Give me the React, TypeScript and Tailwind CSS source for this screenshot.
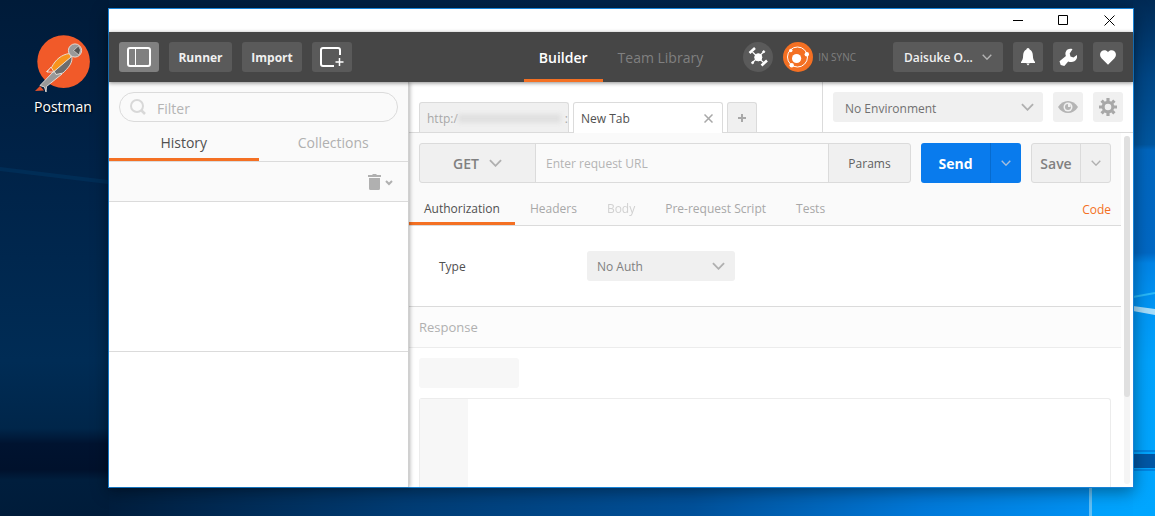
import React, { useState } from "react";
import clsx from "clsx";

const requestTabs = ["Authorization", "Headers", "Body", "Pre-request Script", "Tests"];

function Chevron({ className = "w-[14px] h-[8px]" }: { className?: string }) {
  return (
    <svg viewBox="0 0 14 8" className={className} fill="none" stroke="currentColor" strokeWidth="2" aria-hidden="true">
      <path d="M1 1l6 6 6-6" />
    </svg>
  );
}

function Wallpaper() {
  return (
    <svg
      className="absolute inset-0 w-full h-full"
      viewBox="0 0 1155 516"
      preserveAspectRatio="none"
      aria-hidden="true"
    >
      <defs>
        <linearGradient id="floor" x1="0" x2="1" y1="0" y2="0">
          <stop offset="0" stopColor="#001a36" />
          <stop offset="0.09" stopColor="#001d3c" />
          <stop offset="0.18" stopColor="#002850" />
          <stop offset="0.35" stopColor="#003c74" />
          <stop offset="0.6" stopColor="#005099" />
          <stop offset="0.8" stopColor="#0078d8" />
          <stop offset="0.943" stopColor="#0091f2" />
          <stop offset="0.944" stopColor="#00a0fb" />
          <stop offset="1" stopColor="#00a6ff" />
        </linearGradient>
        <linearGradient id="sky" x1="0" x2="1" y1="0" y2="0">
          <stop offset="0" stopColor="#001b39" />
          <stop offset="0.5" stopColor="#00234a" />
          <stop offset="0.8" stopColor="#002448" />
          <stop offset="1" stopColor="#002a55" />
        </linearGradient>
        <linearGradient id="left" x1="0" x2="0" y1="0" y2="1">
          <stop offset="0" stopColor="#001b39" />
          <stop offset="0.3" stopColor="#002247" />
          <stop offset="0.7" stopColor="#002c55" />
          <stop offset="0.83" stopColor="#00264a" />
          <stop offset="0.86" stopColor="#001330" />
          <stop offset="0.91" stopColor="#00112c" />
          <stop offset="0.93" stopColor="#001e3d" />
          <stop offset="1" stopColor="#001c3a" />
        </linearGradient>
        <linearGradient id="right" x1="0" x2="0" y1="0" y2="1">
          <stop offset="0" stopColor="#002a55" />
          <stop offset="0.15" stopColor="#004685" />
          <stop offset="0.28" stopColor="#00569f" />
          <stop offset="0.29" stopColor="#0065bd" />
          <stop offset="0.49" stopColor="#0068c4" />
          <stop offset="0.51" stopColor="#0084e6" />
          <stop offset="0.6" stopColor="#0096f5" />
          <stop offset="0.7" stopColor="#00a2fc" />
          <stop offset="1" stopColor="#00a6ff" />
        </linearGradient>
      </defs>
      <rect width="1155" height="516" fill="url(#sky)" />
      <rect y="440" width="1155" height="76" fill="url(#floor)" />
      <rect width="109" height="516" fill="url(#left)" />
      <rect x="1133" width="22" height="516" fill="url(#right)" />
      <path d="M0 167L108 180V184L0 171z" fill="#003b6c" opacity="0.4" />
      <path d="M1133 297L1155 293" stroke="#29b8f8" strokeWidth="2" />
      <path d="M1133 306L1155 309V315L1133 311z" fill="#a5dcfa" />
      <rect x="1133" y="450" width="22" height="2" fill="#0085e2" />
      <rect x="1133" y="454" width="22" height="14" fill="#0057a5" />
      <rect x="1133" y="469" width="22" height="2" fill="#0085e2" />
      <rect x="1089" y="487" width="3" height="29" fill="#62bff4" />
    </svg>
  );
}

function DesktopIcon() {
  return (
    <div className="relative w-[108px] shrink-0 pt-[35px] pl-[18px]">
      <div className="w-[90px] flex flex-col items-center">
        <svg viewBox="0 0 56 58" className="w-[56px] h-[58px]" aria-hidden="true">
          <circle cx="28.6" cy="26.6" r="26.3" fill="#f15a29" />
          <g stroke="#e9e4df" strokeWidth="0.9" strokeLinejoin="round">
            <path d="M20 35L5 50.500l4.500 1.500L11 57l.5-5.500L27 39z" fill="#999" />
            <path d="M36.500 21L19 36l2 3.500 7-1.500c5-5 9-9 9-15z" fill="#6d6d6d" />
            <path d="M34.500 18.500c-8 1-14 6-18 14L11.500 36.500l7.500 0 17-14.500z" fill="#f7941d" />
            <path d="M12 37l4-5 3 5z" fill="#f15a29" />
            <circle cx="40" cy="15.500" r="6.600" fill="#999" />
            <path d="M38.500 15.500l5-4.500 2 4-1.500 5z" fill="#555" strokeWidth="0.600" />
          </g>
          <path d="M0 56l5-5 4 4.500z" fill="#e0502b" />
        </svg>
        <span className="mt-1 text-sm leading-5 text-white [text-shadow:1px_1px_2px_#000]">Postman</span>
      </div>
    </div>
  );
}

function TitleBar() {
  return (
    <div className="h-[23px] shrink-0 bg-white flex justify-end text-black">
      <button aria-label="Minimize" className="w-[45px] flex items-center justify-center">
        <svg viewBox="0 0 11 11" className="w-[11px] h-[11px]" fill="none" stroke="currentColor"><path d="M0 5.500h10" /></svg>
      </button>
      <button aria-label="Maximize" className="w-[45px] flex items-center justify-center">
        <svg viewBox="0 0 11 11" className="w-[11px] h-[11px]" fill="none" stroke="currentColor"><path d="M.5.5h9v9h-9z" /></svg>
      </button>
      <button aria-label="Close" className="w-[47px] flex items-center justify-center">
        <svg viewBox="0 0 11 11" className="w-[11px] h-[11px]" fill="none" stroke="currentColor"><path d="M.5.5l10 10M10.500.5l-10 10" /></svg>
      </button>
    </div>
  );
}

function Header() {
  const btn = "h-[30px] rounded-[3px] bg-[#5a5a5a] flex items-center justify-center";
  return (
    <header className="relative z-20 h-[50px] shrink-0 px-[10px] bg-[#464646] text-white grid grid-cols-[1fr_auto_1fr] items-center shadow-[0_1px_4px_rgba(0,0,0,0.45)]">
      <div className="flex gap-[10px] text-xs font-bold text-[#f0f0f0]">
        <button aria-label="Toggle sidebar" className="h-[30px] w-[40px] rounded-[3px] bg-[#808080] flex items-center justify-center">
          <svg viewBox="0 0 24 20" className="w-6 h-5" fill="none" stroke="#fff">
            <rect x="1" y="1" width="22" height="18" rx="2" strokeWidth="2" />
            <path d="M8.500 2v16" strokeWidth="1" />
          </svg>
        </button>
        <button className={clsx(btn, "w-[63px] pt-[2px]")}>Runner</button>
        <button className={clsx(btn, "w-[60px] pt-[2px]")}>Import</button>
        <button aria-label="New window" className={clsx(btn, "w-[40px]")}>
          <svg viewBox="0 0 24 20" className="w-6 h-5" fill="none" stroke="#fff">
            <path d="M20 8V3a2 2 0 0 0-2-2H3a2 2 0 0 0-2 2v14a2 2 0 0 0 2 2h11" strokeWidth="2" />
            <path d="M19.500 11v8M15.500 15h8" strokeWidth="1.500" />
          </svg>
        </button>
      </div>

      <nav className="h-[50px] flex text-sm">
        <button className="px-[15px] font-semibold border-b-[3px] border-[#f47023] pt-[5px]">Builder</button>
        <button className="px-[15px] text-[#808080] border-b-[3px] border-transparent pt-[5px]">Team Library</button>
      </nav>

      <div className="flex items-center gap-[10px] pl-[25px]">
        <button aria-label="Interceptor" className="w-[30px] h-[30px] rounded-full bg-[#5a5a5a]">
          <svg viewBox="0 0 30 30" className="w-[30px] h-[30px]" stroke="#fff" fill="#fff">
            <circle cx="15.300" cy="15.300" r="3.600" />
            <path d="M9.500 10l11.500 11M20.500 10l-11 10.500" strokeWidth="1.200" />
            <path d="M6.500 11l5.500-5M18.500 23.500l5.500-5" strokeWidth="2.600" />
            <circle cx="20.700" cy="9.700" r="1" />
            <circle cx="9.600" cy="20.700" r="1" />
          </svg>
        </button>
        <div className="flex items-center gap-[5px]">
          <button aria-label="Sync" className="w-[30px] h-[30px] rounded-full bg-[#f47023]">
            <svg viewBox="0 0 30 30" className="w-[30px] h-[30px]" fill="#fff">
              <circle cx="14.500" cy="15" r="10" fill="none" stroke="#fff" strokeWidth="1" />
              <circle cx="13.600" cy="16.500" r="4.600" />
              <circle cx="7.800" cy="8.500" r="1.700" />
              <circle cx="23.800" cy="12.300" r="2.200" />
              <circle cx="8.700" cy="23.200" r="2.200" />
            </svg>
          </button>
          <span className="text-[10px] text-[#808080] whitespace-nowrap">IN SYNC</span>
        </div>
        <button className="ml-auto h-[30px] w-[110px] rounded-[3px] bg-[#5a5a5a] pl-[11px] pr-[11px] flex items-center justify-between text-xs font-semibold text-[#f0f0f0]">
          <span className="pt-[2px]">Daisuke O...</span>
          <Chevron className="w-[10px] h-[6px] text-[#b4b4b4]" />
        </button>
        <button aria-label="Notifications" className={clsx(btn, "w-[30px]")}>
          <svg viewBox="0 0 16 18" className="w-4 h-[18px]" fill="#fff">
            <path d="M8 0c1 0 1.500.8 1.600 1.600C12 2.500 12.800 5 12.900 8c.1 3 .8 4.500 2.100 6v1H1v-1c1.300-1.500 2-3 2.100-6 .1-3 .9-5.500 3.300-6.400C6.500.8 7 0 8 0zM6.300 15.500h3.400L8 17.500z" />
          </svg>
        </button>
        <button aria-label="Settings" className={clsx(btn, "w-[30px]")}>
          <svg viewBox="0 0 18 18" className="w-[18px] h-[18px]" fill="#fff">
            <path d="M13.500 1.200C10.800.2 7.700 1.200 6.700 4c-.5 1.400-.3 2.700.2 3.900L.5 13.200l1.200 3.800 3.600 1 3.900-4.600c3.200 1.500 6.900.6 8.300-2.300.6-1.300.7-2.700.4-4.200l-3.400 2.500-3-.9-.8-3z" />
          </svg>
        </button>
        <button aria-label="Favorites" className={clsx(btn, "w-[30px]")}>
          <svg viewBox="0 0 16 15" className="w-4 h-[15px]" fill="#fff">
            <path d="M8 14.800L1.500 8.300C-.4 6.200-.3 3 1.300 1.500 3.300-.4 6.500-.1 8 2.200 9.500-.1 12.700-.4 14.700 1.500c1.600 1.500 1.700 4.700-.2 6.800z" />
          </svg>
        </button>
      </div>
    </header>
  );
}

function Sidebar() {
  const [filter, setFilter] = useState("");

  return (
    <aside className="relative z-10 w-[300px] shrink-0 bg-white border-r border-[#d0d0d0] shadow-[1px_0_4px_rgba(0,0,0,0.3)] flex flex-col">
      <div className="bg-[#fafafa]">
        <label className="mx-[10px] pt-[10px] block">
          <span className="h-[30px] px-[10px] flex items-center gap-[11px] border border-[#dbdbdb] rounded-full">
            <svg viewBox="0 0 16 16" className="w-4 h-4 shrink-0" fill="none" stroke="#d8d8d8" strokeWidth="2">
              <circle cx="7" cy="7" r="6" />
              <path d="M11 11l4 4" strokeWidth="2.500" />
            </svg>
            <input
              aria-label="Filter"
              value={filter}
              onChange={(e) => setFilter(e.target.value)}
              placeholder="Filter"
              className="w-full min-w-0 pt-1 text-sm outline-none bg-transparent placeholder:text-[#b4b4b4]"
            />
          </span>
        </label>
        <div className="h-[40px] flex text-sm border-b border-[#dbdbdb]">
          <button className="flex-1 pt-[5px] text-[#505050] border-b-[3px] border-[#f47023]">History</button>
          <button className="flex-1 pt-[5px] text-[#b0b0b0] border-b-[3px] border-transparent">Collections</button>
        </div>
        <div className="h-[40px] px-[15px] flex items-center justify-end border-b border-[#dbdbdb]">
          <button aria-label="Clear history" className="flex items-center gap-1 text-[#b0b0b0]">
            <svg viewBox="0 0 13 16" className="w-[13px] h-4" fill="currentColor">
              <path d="M0 1h4l1-1h3l1 1h4v2H0zM1 4h11v10.500a1.500 1.500 0 0 1-1.500 1.500h-8A1.500 1.500 0 0 1 1 14.500z" />
            </svg>
            <svg viewBox="0 0 8 6" className="w-2 h-[6px] mt-[2px]" fill="none" stroke="currentColor" strokeWidth="2">
              <path d="M1 1l3 3 3-3" />
            </svg>
          </button>
        </div>
      </div>
      <div className="h-[150px] border-b border-[#dbdbdb]" />
    </aside>
  );
}

function TabBar() {
  return (
    <div className="h-[51px] shrink-0 bg-white border-b border-[#dbdbdb] flex">
      <div className="flex-1 min-w-0 pl-[10px] flex items-end gap-1 text-xs">
        <button className="w-[150px] h-[30px] pl-[7px] pt-[2px] flex items-center bg-[#f0f0f0] border border-b-0 border-[#dbdbdb] rounded-t-[3px] text-[#a8a8a8] overflow-hidden">
          http:/
          <span className="flex-1 h-[9px] bg-[#e0e0e0] blur-[2px]" />
          <span className="pl-1">:</span>
        </button>
        <div className="w-[150px] h-[31px] -mb-px pl-[7px] pr-[9px] flex items-center justify-between bg-white border border-b-0 border-[#dbdbdb] rounded-t-[3px] text-[#505050]">
          <button className="pt-[2px]">New Tab</button>
          <button aria-label="Close tab" className="text-[#a8a8a8]">
            <svg viewBox="0 0 9 9" className="w-[9px] h-[9px]" fill="none" stroke="currentColor" strokeWidth="1.500">
              <path d="M.5.5l8 8M8.500.5l-8 8" />
            </svg>
          </button>
        </div>
        <button aria-label="New tab" className="w-[30px] h-[30px] flex items-center justify-center bg-[#f0f0f0] border border-b-0 border-[#dbdbdb] rounded-t-[3px] text-[#a8a8a8]">
          <svg viewBox="0 0 8 8" className="w-2 h-2" stroke="currentColor" strokeWidth="2"><path d="M4 0v8M0 4h8" /></svg>
        </button>
      </div>
      <div className="w-[311px] shrink-0 pl-[10px] pr-[10px] pt-[10px] flex items-start gap-[10px] border-l border-[#dbdbdb]">
        <div className="relative flex-1">
          <select aria-label="Environment" className="w-full h-[30px] pl-3 pt-[3px] rounded-[3px] bg-[#f0f0f0] appearance-none text-xs text-[#707070]">
            <option>No Environment</option>
          </select>
          <Chevron className="absolute right-[9px] top-[11px] w-[13px] h-[8px] text-[#b0b0b0] pointer-events-none" />
        </div>
        <button aria-label="Quick look" className="w-[30px] h-[30px] rounded-[3px] bg-[#f0f0f0] flex items-center justify-center text-[#b4b4b4]">
          <svg viewBox="0 0 20 12" className="w-5 h-3" fill="currentColor">
            <path d="M0 6C2.500 2 6 0 10 0s7.500 2 10 6c-2.500 4-6 6-10 6S2.500 10 0 6z" />
            <circle cx="10" cy="6" r="4.500" fill="#f0f0f0" />
            <circle cx="10" cy="6" r="3" />
            <path d="M10 6V3h2.500v3z" fill="#f0f0f0" />
          </svg>
        </button>
        <button aria-label="Manage environments" className="w-[30px] h-[30px] rounded-[3px] bg-[#f0f0f0] flex items-center justify-center text-[#a8a8a8]">
          <svg viewBox="0 0 18 18" className="w-[18px] h-[18px]" fill="none" stroke="currentColor">
            <circle cx="9" cy="9" r="4.800" strokeWidth="3" />
            <path d="M9 0v3M9 15v3M0 9h3M15 9h3M2.600 2.600l2.200 2.200M13.200 13.200l2.200 2.200M2.600 15.400l2.200-2.200M13.200 4.800l2.200-2.200" strokeWidth="3.200" />
          </svg>
        </button>
      </div>
    </div>
  );
}

function UrlBar() {
  const [url, setUrl] = useState("");

  return (
    <div className="px-[10px] pt-[10px] flex gap-[10px]">
      <div className="flex-1 min-w-0 h-[40px] flex border border-[#dbdbdb] rounded-[3px] bg-[#f0f0f0] overflow-hidden">
        <div className="relative w-[115px] shrink-0">
          <select aria-label="Method" className="w-full h-full pl-[33px] pt-[2px] appearance-none bg-transparent text-sm font-semibold text-[#808080]">
            <option>GET</option>
            <option>POST</option>
          </select>
          <Chevron className="absolute right-[33px] top-[15px] w-[13px] h-[8px] text-[#b0b0b0] pointer-events-none" />
        </div>
        <input
          aria-label="Request URL"
          value={url}
          onChange={(e) => setUrl(e.target.value)}
          placeholder="Enter request URL"
          className="flex-1 min-w-0 px-[10px] pt-[2px] bg-[#fafafa] border-x border-[#dbdbdb] text-xs outline-none placeholder:text-[#b4b4b4]"
        />
        <button className="w-[81px] shrink-0 pt-[2px] text-xs text-[#606060]">Params</button>
      </div>
      <div className="h-[40px] flex rounded-[3px] bg-[#097bed] text-white">
        <button className="w-[69px] pt-[2px] text-sm font-bold">Send</button>
        <button aria-label="Send options" className="w-[31px] flex items-center justify-center border-l border-[#066bcf]">
          <Chevron className="w-[10px] h-[6px] text-[#a9bfdc]" />
        </button>
      </div>
      <div className="h-[40px] flex border border-[#dbdbdb] rounded-[3px] bg-[#f0f0f0]">
        <button className="w-[48px] pt-[2px] text-sm font-semibold text-[#808080]">Save</button>
        <button aria-label="Save options" className="w-[30px] flex items-center justify-center border-l border-[#dbdbdb]">
          <Chevron className="w-[10px] h-[6px] text-[#b0b0b0]" />
        </button>
      </div>
    </div>
  );
}

function RequestBuilder() {
  const [active, setActive] = useState("Authorization");

  return (
    <section>
      <div className="bg-[#fafafa] border-b border-[#dbdbdb]">
        <UrlBar />
        <div className="h-[42px] pr-[10px] flex items-stretch text-xs">
          {requestTabs.map((t) => (
            <button
              key={t}
              disabled={t === "Body"}
              onClick={() => setActive(t)}
              className={clsx(
                "px-[15px] pt-3 border-b-[3px] whitespace-nowrap",
                t === active ? "border-[#f47023] text-[#505050]" : "border-transparent text-[#a8a8a8]",
                t === "Body" && "opacity-50"
              )}
            >
              {t}
            </button>
          ))}
          <button className="ml-auto pt-3 text-[#f47023]">Code</button>
        </div>
      </div>
      <div className="py-[25px] pl-[30px] flex items-center border-b border-[#dbdbdb] text-xs">
        <label htmlFor="auth-type" className="w-[148px] pt-[2px] text-[#505050]">Type</label>
        <div className="relative w-[148px]">
          <select id="auth-type" className="w-full h-[30px] pl-[10px] pt-[2px] rounded-[3px] bg-[#f0f0f0] appearance-none text-[#808080]">
            <option>No Auth</option>
            <option>Basic Auth</option>
          </select>
          <Chevron className="absolute right-[10px] top-[11px] w-[13px] h-[8px] text-[#b0b0b0] pointer-events-none" />
        </div>
      </div>
    </section>
  );
}

function ResponsePane() {
  return (
    <section className="flex-1 min-h-0 flex flex-col">
      <h2 className="h-[41px] shrink-0 px-[10px] pt-[2px] flex items-center bg-[#fcfcfc] border-b border-[#ececec] text-[13px] text-[#b0b0b0]">
        Response
      </h2>
      <div className="mt-[10px] ml-[10px] w-[100px] h-[30px] shrink-0 rounded-[3px] bg-[#f7f7f7]" />
      <div className="flex-1 mt-[10px] mx-[10px] flex border border-b-0 border-[#ececec] rounded-t-[3px]">
        <div className="w-[48px] bg-[#f7f7f7]" />
      </div>
    </section>
  );
}

export default function App() {
  return (
    <div className="relative h-screen flex overflow-hidden bg-[#002247] font-['Open_Sans',sans-serif]">
      <Wallpaper />
      <DesktopIcon />
      <div className="relative flex-1 min-w-0 mt-2 mr-[21px] mb-7 flex flex-col bg-white border border-[#1883d7] shadow-[0_4px_16px_rgba(0,0,0,0.4)]">
        <TitleBar />
        <Header />
        <div className="flex-1 min-h-0 flex">
          <Sidebar />
          <main className="flex-1 min-w-0 flex flex-col">
            <TabBar />
            <div className="flex-1 min-h-0 flex">
              <div className="flex-1 min-w-0 flex flex-col overflow-hidden">
                <RequestBuilder />
                <ResponsePane />
              </div>
              <div className="w-3 shrink-0 px-[3px] pt-[3px] pb-[3px]">
                <div className="h-full rounded-full bg-[#f5f5f5]">
                  <div className="h-3/4 rounded-full bg-[#e0e0e0]" />
                </div>
              </div>
            </div>
          </main>
        </div>
      </div>
    </div>
  );
}
